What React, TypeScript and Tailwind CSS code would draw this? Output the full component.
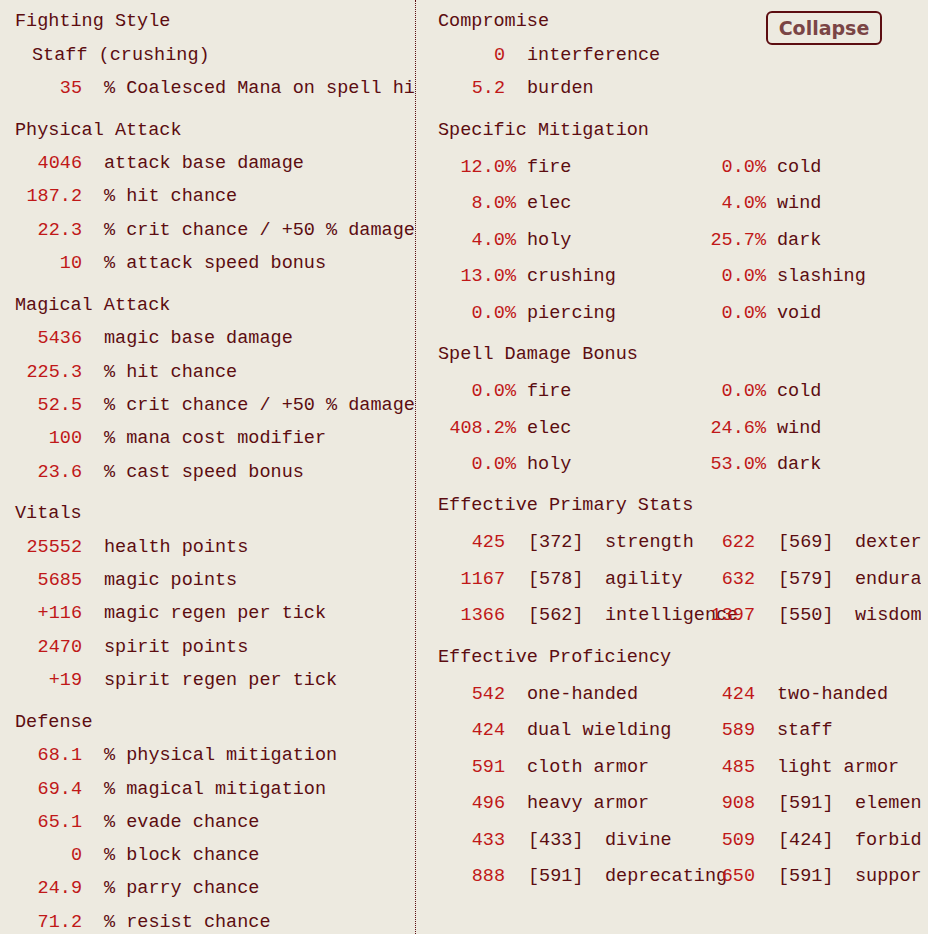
import React from "react";

type Row = { v: string; label: string };
type Pair = [string, string, string, string];
type Stat = { v: string; base?: string; name: string };

const mono = "font-['Liberation_Mono',monospace] text-[18.5px]";

const leftSections: { title: string; rows: Row[] }[] = [
  {
    title: "Physical Attack",
    rows: [
      { v: "4046", label: "attack base damage" },
      { v: "187.2", label: "% hit chance" },
      { v: "22.3", label: "% crit chance / +50 % damage" },
      { v: "10", label: "% attack speed bonus" },
    ],
  },
  {
    title: "Magical Attack",
    rows: [
      { v: "5436", label: "magic base damage" },
      { v: "225.3", label: "% hit chance" },
      { v: "52.5", label: "% crit chance / +50 % damage" },
      { v: "100", label: "% mana cost modifier" },
      { v: "23.6", label: "% cast speed bonus" },
    ],
  },
  {
    title: "Vitals",
    rows: [
      { v: "25552", label: "health points" },
      { v: "5685", label: "magic points" },
      { v: "+116", label: "magic regen per tick" },
      { v: "2470", label: "spirit points" },
      { v: "+19", label: "spirit regen per tick" },
    ],
  },
  {
    title: "Defense",
    rows: [
      { v: "68.1", label: "% physical mitigation" },
      { v: "69.4", label: "% magical mitigation" },
      { v: "65.1", label: "% evade chance" },
      { v: "0", label: "% block chance" },
      { v: "24.9", label: "% parry chance" },
      { v: "71.2", label: "% resist chance" },
    ],
  },
];

const mitigation: Pair[] = [
  ["12.0%", "fire", "0.0%", "cold"],
  ["8.0%", "elec", "4.0%", "wind"],
  ["4.0%", "holy", "25.7%", "dark"],
  ["13.0%", "crushing", "0.0%", "slashing"],
  ["0.0%", "piercing", "0.0%", "void"],
];

const spellBonus: Pair[] = [
  ["0.0%", "fire", "0.0%", "cold"],
  ["408.2%", "elec", "24.6%", "wind"],
  ["0.0%", "holy", "53.0%", "dark"],
];

const primary: [Stat, Stat][] = [
  [
    { v: "425", base: "[372]", name: "strength" },
    { v: "622", base: "[569]", name: "dexterity" },
  ],
  [
    { v: "1167", base: "[578]", name: "agility" },
    { v: "632", base: "[579]", name: "endurance" },
  ],
  [
    { v: "1366", base: "[562]", name: "intelligence" },
    { v: "1397", base: "[550]", name: "wisdom" },
  ],
];

const proficiency: [Stat, Stat][] = [
  [
    { v: "542", name: "one-handed" },
    { v: "424", name: "two-handed" },
  ],
  [
    { v: "424", name: "dual wielding" },
    { v: "589", name: "staff" },
  ],
  [
    { v: "591", name: "cloth armor" },
    { v: "485", name: "light armor" },
  ],
  [
    { v: "496", name: "heavy armor" },
    { v: "908", base: "[591]", name: "elemental" },
  ],
  [
    { v: "433", base: "[433]", name: "divine" },
    { v: "509", base: "[424]", name: "forbidden" },
  ],
  [
    { v: "888", base: "[591]", name: "deprecating" },
    { v: "650", base: "[591]", name: "supportive" },
  ],
];

const Header = ({ children }: { children: React.ReactNode }) => (
  <div className="h-[33.33px] flex items-center whitespace-nowrap">
    {children}
  </div>
);

const LeftRow = ({ v, label }: Row) => (
  <div className="h-[33.33px] flex items-center whitespace-nowrap">
    <span className="w-[67px] shrink-0 text-right text-[#c01818]">{v}</span>
    <span className="ml-[22px]">{label}</span>
  </div>
);

const StatCell = ({ s }: { s: Stat }) => (
  <div className="w-[250px] shrink-0 flex items-center whitespace-nowrap">
    <span className="w-[67px] shrink-0 text-right text-[#c01818]">{s.v}</span>
    {s.base ? (
      <>
        <span className="ml-[23px] w-[55px] shrink-0">{s.base}</span>
        <span className="ml-[22px]">{s.name}</span>
      </>
    ) : (
      <span className="ml-[22px]">{s.name}</span>
    )}
  </div>
);

const PairTable = ({ rows }: { rows: Pair[] }) => (
  <div className="pt-[2px]">
    {rows.map((r, i) => (
      <div key={i} className="h-[36.5px] flex items-center whitespace-nowrap">
        <div className="w-[250px] shrink-0 flex">
          <span className="w-[78px] text-right text-[#c01818]">{r[0]}</span>
          <span className="ml-[11px]">{r[1]}</span>
        </div>
        <div className="flex">
          <span className="w-[78px] text-right text-[#c01818]">{r[2]}</span>
          <span className="ml-[11px]">{r[3]}</span>
        </div>
      </div>
    ))}
  </div>
);

const StatTable = ({ rows }: { rows: [Stat, Stat][] }) => (
  <div className="pt-[2px]">
    {rows.map((r, i) => (
      <div key={i} className="h-[36.5px] flex items-center">
        <StatCell s={r[0]} />
        <StatCell s={r[1]} />
      </div>
    ))}
  </div>
);

export default function App() {
  return (
    <div
      className={`w-[928px] h-[934px] overflow-hidden bg-[#edeae0] text-[#5c0d11] flex ${mono}`}
    >
      <div className="w-[416px] shrink-0 border-r border-dotted border-[#5c0d11] overflow-hidden pl-[15px] pt-[5.5px]">
        <Header>Fighting Style</Header>
        <div className="h-[33.33px] flex items-center pl-[17px] whitespace-nowrap">
          Staff (crushing)
        </div>
        <LeftRow v="35" label="% Coalesced Mana on spell hit" />
        {leftSections.map((s) => (
          <div key={s.title} className="mt-[8.5px]">
            <Header>{s.title}</Header>
            {s.rows.map((r, i) => (
              <LeftRow key={i} {...r} />
            ))}
          </div>
        ))}
      </div>

      <div className="relative w-[505px] shrink-0 overflow-hidden pl-[22px] pt-[5.5px]">
        <button className="absolute top-[11px] right-[39px] w-[116px] h-[34px] rounded-[6px] border-2 border-[#5c0d11] bg-[#edeae0] text-[#7a4545] font-['DejaVu_Sans',sans-serif] font-bold text-[19px] leading-none flex items-center justify-center">
          Collapse
        </button>
        <Header>Compromise</Header>
        <LeftRow v="0" label="interference" />
        <LeftRow v="5.2" label="burden" />

        <div className="mt-[8.5px]">
          <Header>Specific Mitigation</Header>
          <PairTable rows={mitigation} />
        </div>
        <div className="mt-[6.5px]">
          <Header>Spell Damage Bonus</Header>
          <PairTable rows={spellBonus} />
        </div>
        <div className="mt-[6.5px]">
          <Header>Effective Primary Stats</Header>
          <StatTable rows={primary} />
        </div>
        <div className="mt-[6.5px]">
          <Header>Effective Proficiency</Header>
          <StatTable rows={proficiency} />
        </div>
      </div>
    </div>
  );
}
